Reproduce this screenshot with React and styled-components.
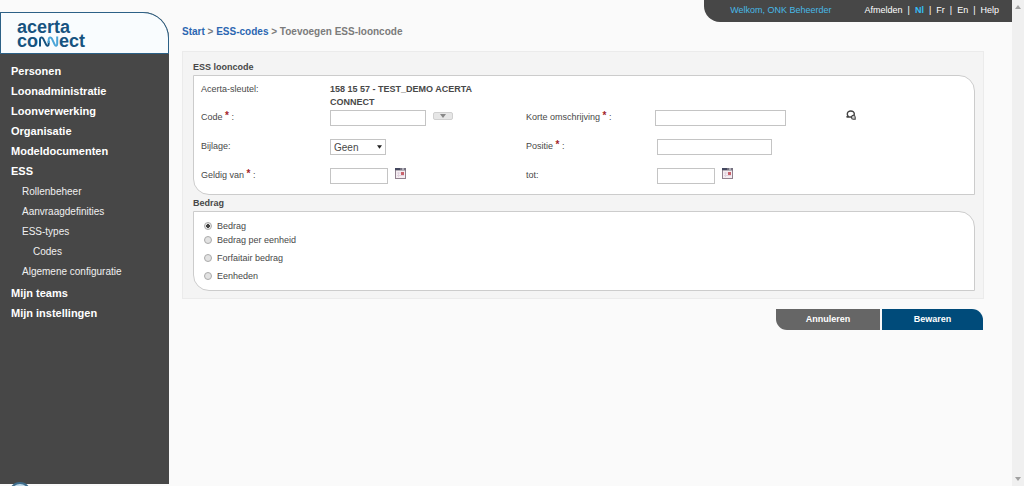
import React from "react";
import styled, { createGlobalStyle } from "styled-components";

const GlobalStyle = createGlobalStyle`
  * { box-sizing: border-box; }
  body {
    margin: 0;
    background: #fafafa;
    color: #484848;
    font: 9px/16px "Liberation Sans", Arial, sans-serif;
  }
  a { color: inherit; text-decoration: none; }
  ul { list-style: none; margin: 0; padding: 0; }
`;

const Page = styled.div`
  position: relative;
  display: grid;
  grid-template-columns: 169px 1fr 12px;
  min-height: 100vh;
  overflow: hidden;
`;

const Sidebar = styled.aside`
  margin: 12px 0 2px;
  background: #474747;
  border-top-right-radius: 26px;
`;

const Logo = styled.a`
  display: block;
  height: 42px;
  padding: 7px 0 0 16px;
  border: 1px solid #2c6187;
  border-top-right-radius: 26px;
  background: #f9fcfe;
  color: #165380;
  font-size: 18px;
  font-weight: bold;
  line-height: 14px;
`;

const LogoLine = styled.span`
  display: flex;
`;

const Menu = styled.ul`
  padding: 7px 0 0 11px;
`;

const MenuItem = styled.li`
  color: #fff;
  font-size: 11px;
  font-weight: bold;
  line-height: 20px;
`;

const SubMenu = styled.ul`
  padding: 1px 0 1px 11px;

  & & { padding: 0 0 0 11px; }
`;

const SubItem = styled.li`
  color: #f0f0f0;
  font-size: 10px;
  font-weight: normal;
  line-height: 20px;
`;

const Content = styled.div`
  display: flex;
  flex-direction: column;
`;

const TopBar = styled.header`
  display: flex;
  align-self: flex-end;
  gap: 33px;
  height: 22px;
  padding: 0 13px 0 26px;
  border-bottom-left-radius: 16px;
  background: #474747;
  color: #fff;
  line-height: 21px;
`;

const Welcome = styled.span`
  color: #48b9e6;
`;

const TopLinks = styled.nav`
  display: flex;
  gap: 5px;
`;

const TopLink = styled.a`
  color: ${(p) => (p.$active ? "#35bff5" : "#fff")};
  font-weight: ${(p) => (p.$active ? "bold" : "normal")};
`;

const Main = styled.main`
  padding: 2px 28px 0 13px;
`;

const Breadcrumb = styled.nav`
  color: #7b7b7b;
  font-size: 10px;
  font-weight: bold;

  a { color: #2b66b1; }
`;

const Panel = styled.div`
  margin-top: 11px;
  padding: 8px 8px 7px 10px;
  border: 1px solid #ebebeb;
  background: #f4f4f4;
`;

const Section = styled.section`
  & + & { margin-top: 1px; }
`;

const SectionTitle = styled.h2`
  margin: 0;
  font-size: 9px;
  line-height: 15px;
`;

const Box = styled.div`
  padding: 7px;
  border: 1px solid #ccc;
  border-radius: 0 16px 0 16px;
  background: #fff;
`;

const FieldGrid = styled.div`
  display: grid;
  grid-template-columns: 129px 196px 129px 1fr 121px;
  row-gap: 13px;
  padding-bottom: 3px;
`;

const FieldLabel = styled.label`
  line-height: 14px;
`;

const KeyRow = styled.div`
  display: grid;
  grid-template-columns: 129px 160px;
  margin-bottom: 1px;
  line-height: 13px;
`;

const Required = styled.sup`
  color: #a3242b;
  font-size: 10px;
  font-weight: bold;
  line-height: 0;
  vertical-align: 1px;
`;

const Field = styled.div`
  display: flex;
  gap: 7px;
  padding-left: ${(p) => (p.$indent ? 2 : 0)}px;
`;

const TextInput = styled.input`
  width: ${(p) => p.$width}px;
  height: 16px;
  padding: 0 3px;
  border: 1px solid #c4c4c4;
  background: #fff;
  font: inherit;
`;

const SelectWrap = styled.span`
  position: relative;
  height: 16px;

  svg {
    position: absolute;
    top: 6px;
    right: 4px;
    pointer-events: none;
  }
`;

const Select = styled.select`
  appearance: none;
  display: block;
  width: 56px;
  height: 16px;
  padding: 0 3px;
  border: 1px solid #c4c4c4;
  border-radius: 0;
  background: #fff;
  color: #484848;
  font: inherit;
  font-size: 10px;
`;

const DropButton = styled.button`
  display: flex;
  align-items: center;
  justify-content: center;
  width: 20px;
  height: 8px;
  margin-top: 2px;
  padding: 0;
  border: 1px solid #d0d0d0;
  border-radius: 2px;
  background: #e6e6e6;
`;

const IconButton = styled.button`
  display: flex;
  align-self: flex-start;
  padding: 0;
  border: 0;
  background: none;
`;

const RadioLabel = styled.label`
  display: flex;
  align-items: center;
  gap: 5px;
  height: 14px;
  margin-top: ${(p) => (p.$spaced ? 4 : 0)}px;
  padding-left: 3px;
`;

const Radio = styled.input`
  appearance: none;
  width: 8px;
  height: 8px;
  margin: 0;
  border: 1px solid #ababab;
  border-radius: 50%;
  background: #e2e2e2;

  &:checked {
    background: radial-gradient(circle, #444 0 2px, #e6e6e6 2px);
  }
`;

const Actions = styled.div`
  display: flex;
  justify-content: flex-end;
  gap: 2px;
  margin-top: 10px;
  padding-right: 1px;
`;

const ActionButton = styled.button`
  width: ${(p) => (p.$primary ? 101 : 104)}px;
  height: 21px;
  padding: 0 0 2px;
  border: 0;
  border-radius: ${(p) => (p.$primary ? "0 11px 0 0" : "0 0 0 11px")};
  background: ${(p) => (p.$primary ? "#004b7a" : "#666")};
  color: #fff;
  font: inherit;
  font-weight: bold;
`;

const ScrollTrack = styled.div`
  display: flex;
  flex-direction: column;
  align-items: center;
  justify-content: space-between;
  padding: 5px 0;
  background: #f0f0f0;
`;

const FooterMark = styled.svg`
  position: absolute;
  bottom: -18px;
  left: 9px;
`;

function Arrow({ up, size = 6, color = "#a0a0a0" }) {
  return (
    <svg width={size} height="4" viewBox="0 0 6 4" aria-hidden="true">
      <path d={up ? "M0 4L3 0L6 4Z" : "M0 0H6L3 4Z"} fill={color} />
    </svg>
  );
}

function CalendarIcon() {
  return (
    <svg width="11" height="11" viewBox="0 0 11 11" aria-hidden="true">
      <rect x=".5" y=".5" width="10" height="10" fill="#f5edf1" stroke="#91828f" />
      <path d="M0 0H11V2.500H0Z" fill="#75717f" />
      <path d="M0 0H5V2H0Z" fill="#44485f" />
      <path d="M7 1H9" stroke="#e8e8ee" />
      <path d="M2 5H6M2 7.500H9M3.500 4V9" stroke="#e1d3df" />
      <path d="M6 4H9V7H6Z" fill="#c9626c" />
    </svg>
  );
}

function SpeechIcon() {
  return (
    <svg width="10" height="10" viewBox="0 0 10 10" aria-hidden="true" fill="none" stroke="#434343">
      <path d="M.6 7H5.500C7.400 6.600 8.300 5.400 8.300 4C8.300 2.200 6.800 1 4.800 1S1.300 2.200 1.300 4C1.300 5 1.700 5.700 2.200 6.200L.6 7Z" strokeWidth="1.400" />
      <path d="M5.500 7.400C5.500 5.800 6.500 5.300 7.400 5.300S9.200 6 9.200 7.300V9.200H7.300C6.200 9.200 5.500 8.500 5.500 7.400Z" fill="#ccc" strokeWidth="1.100" />
    </svg>
  );
}

function LogoWave() {
  return (
    <svg width="21" height="13" viewBox="0 0 20 13" aria-hidden="true" fill="none" strokeWidth="2">
      <path d="M1.500 12.500V5.500C1.500 3 3.800 2.800 4.700 4.600L7.600 10.600C8.400 12.300 10.200 12 10.200 9.800V7" stroke="#165380" />
      <path d="M10.200 9V5.500C10.200 3 12.500 2.800 13.400 4.600L16.200 10.600C17 12.300 18.700 12 18.700 9.800V2.500" stroke="#4ba5d8" />
    </svg>
  );
}

const Star = () => <Required>*</Required>;

export default function App() {
  return (
    <Page>
      <GlobalStyle />
      <Sidebar>
        <Logo href="#" aria-label="acerta connect">
          <LogoLine>acerta</LogoLine>
          <LogoLine>co<LogoWave />ect</LogoLine>
        </Logo>
        <nav>
          <Menu>
            {["Personen", "Loonadministratie", "Loonverwerking", "Organisatie", "Modeldocumenten"].map((t) => (
              <MenuItem key={t}><a href="#">{t}</a></MenuItem>
            ))}
            <MenuItem>
              <a href="#">ESS</a>
              <SubMenu>
                <SubItem><a href="#">Rollenbeheer</a></SubItem>
                <SubItem><a href="#">Aanvraagdefinities</a></SubItem>
                <SubItem>
                  <a href="#">ESS-types</a>
                  <SubMenu><SubItem><a href="#">Codes</a></SubItem></SubMenu>
                </SubItem>
                <SubItem><a href="#">Algemene configuratie</a></SubItem>
              </SubMenu>
            </MenuItem>
            <MenuItem><a href="#">Mijn teams</a></MenuItem>
            <MenuItem><a href="#">Mijn instellingen</a></MenuItem>
          </Menu>
        </nav>
      </Sidebar>

      <Content>
        <TopBar>
          <Welcome>Welkom, ONK Beheerder</Welcome>
          <TopLinks>
            <TopLink href="#">Afmelden</TopLink>|
            <TopLink href="#" $active>Nl</TopLink>|
            <TopLink href="#">Fr</TopLink>|
            <TopLink href="#">En</TopLink>|
            <TopLink href="#">Help</TopLink>
          </TopLinks>
        </TopBar>
        <Main>
          <Breadcrumb>
            <a href="#">Start</a> &gt; <a href="#">ESS-codes</a> &gt; Toevoegen ESS-looncode
          </Breadcrumb>
          <form onSubmit={(e) => e.preventDefault()}>
            <Panel>
              <Section>
                <SectionTitle>ESS looncode</SectionTitle>
                <Box>
                  <KeyRow>
                    <span>Acerta-sleutel:</span>
                    <strong>158 15 57 - TEST_DEMO ACERTA CONNECT</strong>
                  </KeyRow>
                  <FieldGrid>
                    <FieldLabel htmlFor="code">Code <Star /> :</FieldLabel>
                    <Field>
                      <TextInput id="code" $width={96} />
                      <DropButton type="button" aria-label="Code kiezen"><Arrow color="#888" /></DropButton>
                    </Field>
                    <FieldLabel htmlFor="short">Korte omschrijving <Star /> :</FieldLabel>
                    <Field><TextInput id="short" $width={131} /></Field>
                    <IconButton type="button" aria-label="Vertalingen"><SpeechIcon /></IconButton>

                    <FieldLabel htmlFor="attachment">Bijlage:</FieldLabel>
                    <Field>
                      <SelectWrap>
                        <Select id="attachment"><option>Geen</option></Select>
                        <Arrow size={5} color="#222" />
                      </SelectWrap>
                    </Field>
                    <FieldLabel htmlFor="position">Positie <Star /> :</FieldLabel>
                    <Field $indent><TextInput id="position" $width={115} /></Field>
                    <span />

                    <FieldLabel htmlFor="from">Geldig van <Star /> :</FieldLabel>
                    <Field>
                      <TextInput id="from" $width={58} />
                      <IconButton type="button" aria-label="Begindatum kiezen"><CalendarIcon /></IconButton>
                    </Field>
                    <FieldLabel htmlFor="until">tot:</FieldLabel>
                    <Field $indent>
                      <TextInput id="until" $width={58} />
                      <IconButton type="button" aria-label="Einddatum kiezen"><CalendarIcon /></IconButton>
                    </Field>
                  </FieldGrid>
                </Box>
              </Section>
              <Section>
                <SectionTitle>Bedrag</SectionTitle>
                <Box role="radiogroup" aria-label="Bedrag">
                  <RadioLabel><Radio type="radio" name="amount" defaultChecked />Bedrag</RadioLabel>
                  <RadioLabel><Radio type="radio" name="amount" />Bedrag per eenheid</RadioLabel>
                  <RadioLabel $spaced><Radio type="radio" name="amount" />Forfaitair bedrag</RadioLabel>
                  <RadioLabel $spaced><Radio type="radio" name="amount" />Eenheden</RadioLabel>
                </Box>
              </Section>
            </Panel>
            <Actions>
              <ActionButton type="button">Annuleren</ActionButton>
              <ActionButton type="submit" $primary>Bewaren</ActionButton>
            </Actions>
          </form>
        </Main>
      </Content>

      <ScrollTrack aria-hidden="true">
        <Arrow up />
        <Arrow />
      </ScrollTrack>
      <FooterMark width="22" height="22" viewBox="0 0 22 22" aria-hidden="true">
        <circle cx="11" cy="11" r="10" fill="#c5deed" stroke="#3f6d8c" strokeWidth="2" />
      </FooterMark>
    </Page>
  );
}
